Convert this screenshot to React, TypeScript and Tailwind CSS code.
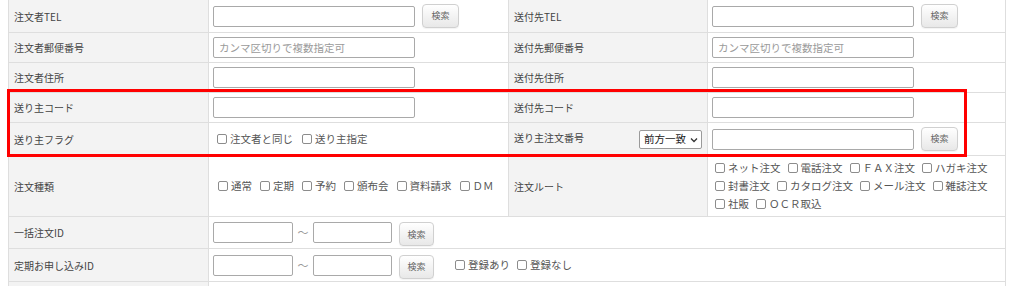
import React from "react";

const font = { fontFamily: '"Noto Sans CJK JP", "Noto Sans", sans-serif' };

function Label({ children, className = "" }: { children?: React.ReactNode; className?: string }) {
  return (
    <div className={`bg-[#f3f3f3] pl-[5px] pr-[5px] flex items-center text-[10px] text-[#444] ${className}`}>
      {children}
    </div>
  );
}

function Value({ children, className = "" }: { children?: React.ReactNode; className?: string }) {
  return <div className={`bg-white pl-[4px] flex items-center ${className}`}>{children}</div>;
}

function TextInput({ w = "w-[202px]", placeholder }: { w?: string; placeholder?: string }) {
  return (
    <input
      type="text"
      placeholder={placeholder}
      className={`h-[21px] ${w} border border-[#a9a9a9] rounded-[2px] px-[5px] text-[10.5px] text-[#333] placeholder:text-[#9a9a9a] bg-white outline-none`}
      style={font}
    />
  );
}

function Btn({ w = "w-[37px]" }: { w?: string }) {
  return (
    <button
      className={`h-[24px] ${w} rounded-[4px] border border-[#d0d0d0] bg-linear-to-b from-white to-[#e8e8e8] text-[9px] text-[#666] shadow-[0_1px_1px_rgba(0,0,0,0.05)]`}
      style={font}
    >
      検索
    </button>
  );
}

function Check({ children }: { children: React.ReactNode }) {
  return (
    <span className="inline-flex items-center gap-[3px] text-[10.5px] text-[#555] leading-[18px] whitespace-nowrap">
      <span className="w-[10px] h-[10px] border border-[#8c8c8c] rounded-[2px] bg-white shrink-0" />
      {children}
    </span>
  );
}

export default function App() {
  return (
    <div className="relative w-[1024px] h-[286px] overflow-hidden bg-white" style={font}>
      <div className="ml-[8px] w-[998px] border-l border-r border-[#dedede] bg-[#dedede] grid grid-cols-[199px_299px_198px_297px] grid-rows-[32px_29px_29px_29px_32px_60px_31px_32px_30px] gap-px">
        {/* Row 1 */}
        <Label>注文者TEL</Label>
        <Value className="gap-[7px]">
          <TextInput />
          <Btn />
        </Value>
        <Label>送付先TEL</Label>
        <Value className="gap-[7px]">
          <TextInput />
          <Btn />
        </Value>

        {/* Row 2 */}
        <Label>注文者郵便番号</Label>
        <Value>
          <TextInput placeholder="カンマ区切りで複数指定可" />
        </Value>
        <Label>送付先郵便番号</Label>
        <Value>
          <TextInput placeholder="カンマ区切りで複数指定可" />
        </Value>

        {/* Row 3 */}
        <Label>注文者住所</Label>
        <Value>
          <TextInput />
        </Value>
        <Label>送付先住所</Label>
        <Value>
          <TextInput />
        </Value>

        {/* Row 4 */}
        <Label>送り主コード</Label>
        <Value>
          <TextInput />
        </Value>
        <Label>送付先コード</Label>
        <Value>
          <TextInput />
        </Value>

        {/* Row 5 */}
        <Label>送り主フラグ</Label>
        <Value className="pl-[8px] gap-[9px]">
          <Check>注文者と同じ</Check>
          <Check>送り主指定</Check>
        </Value>
        <Label className="justify-between">
          <span className="-mt-[3px]">送り主注文番号</span>
          <span className="h-[19px] w-[63px] border border-[#9a9a9a] rounded-[2px] bg-white flex items-center justify-between pl-[4px] pr-[3px] text-[10.5px] text-[#222]">
            前方一致
            <svg width="8" height="6" viewBox="0 0 8 6" className="mt-[1px]">
              <path d="M1 1.5 L4 4.5 L7 1.5" fill="none" stroke="#333" strokeWidth="1.3" />
            </svg>
          </span>
        </Label>
        <Value className="gap-[7px]">
          <TextInput />
          <Btn />
        </Value>

        {/* Row 6 */}
        <Label>注文種類</Label>
        <Value className="pl-[9px] gap-[8px]">
          <Check>通常</Check>
          <Check>定期</Check>
          <Check>予約</Check>
          <Check>頒布会</Check>
          <Check>資料請求</Check>
          <Check>ＤＭ</Check>
        </Value>
        <Label>注文ルート</Label>
        <Value className="pl-[7px]">
          <div className="flex flex-wrap gap-x-[7px] w-[285px]">
            <Check>ネット注文</Check>
            <Check>電話注文</Check>
            <Check>ＦＡＸ注文</Check>
            <Check>ハガキ注文</Check>
            <Check>封書注文</Check>
            <Check>カタログ注文</Check>
            <Check>メール注文</Check>
            <Check>雑誌注文</Check>
            <Check>社販</Check>
            <Check>ＯＣＲ取込</Check>
          </div>
        </Value>

        {/* Row 7 */}
        <Label>一括注文ID</Label>
        <Value className="col-span-3">
          <TextInput w="w-[80px]" />
          <span className="w-[20px] text-center text-[11px] text-[#999]">～</span>
          <TextInput w="w-[79px]" />
          <span className="ml-[7px]">
            <Btn w="w-[35px]" />
          </span>
        </Value>

        {/* Row 8 */}
        <Label>定期お申し込みID</Label>
        <Value className="col-span-3">
          <TextInput w="w-[80px]" />
          <span className="w-[20px] text-center text-[11px] text-[#999]">～</span>
          <TextInput w="w-[79px]" />
          <span className="ml-[7px]">
            <Btn w="w-[35px]" />
          </span>
          <span className="ml-[21px] flex gap-[7px]">
            <Check>登録あり</Check>
            <Check>登録なし</Check>
          </span>
        </Value>

        {/* Row 9 (partial) */}
        <Label />
        <Value className="col-span-3" />
      </div>

      {/* Red highlight annotation */}
      <div className="absolute left-[7px] top-[89px] w-[960px] h-[68px] border-[3px] border-[#ff0000] pointer-events-none" />
    </div>
  );
}
